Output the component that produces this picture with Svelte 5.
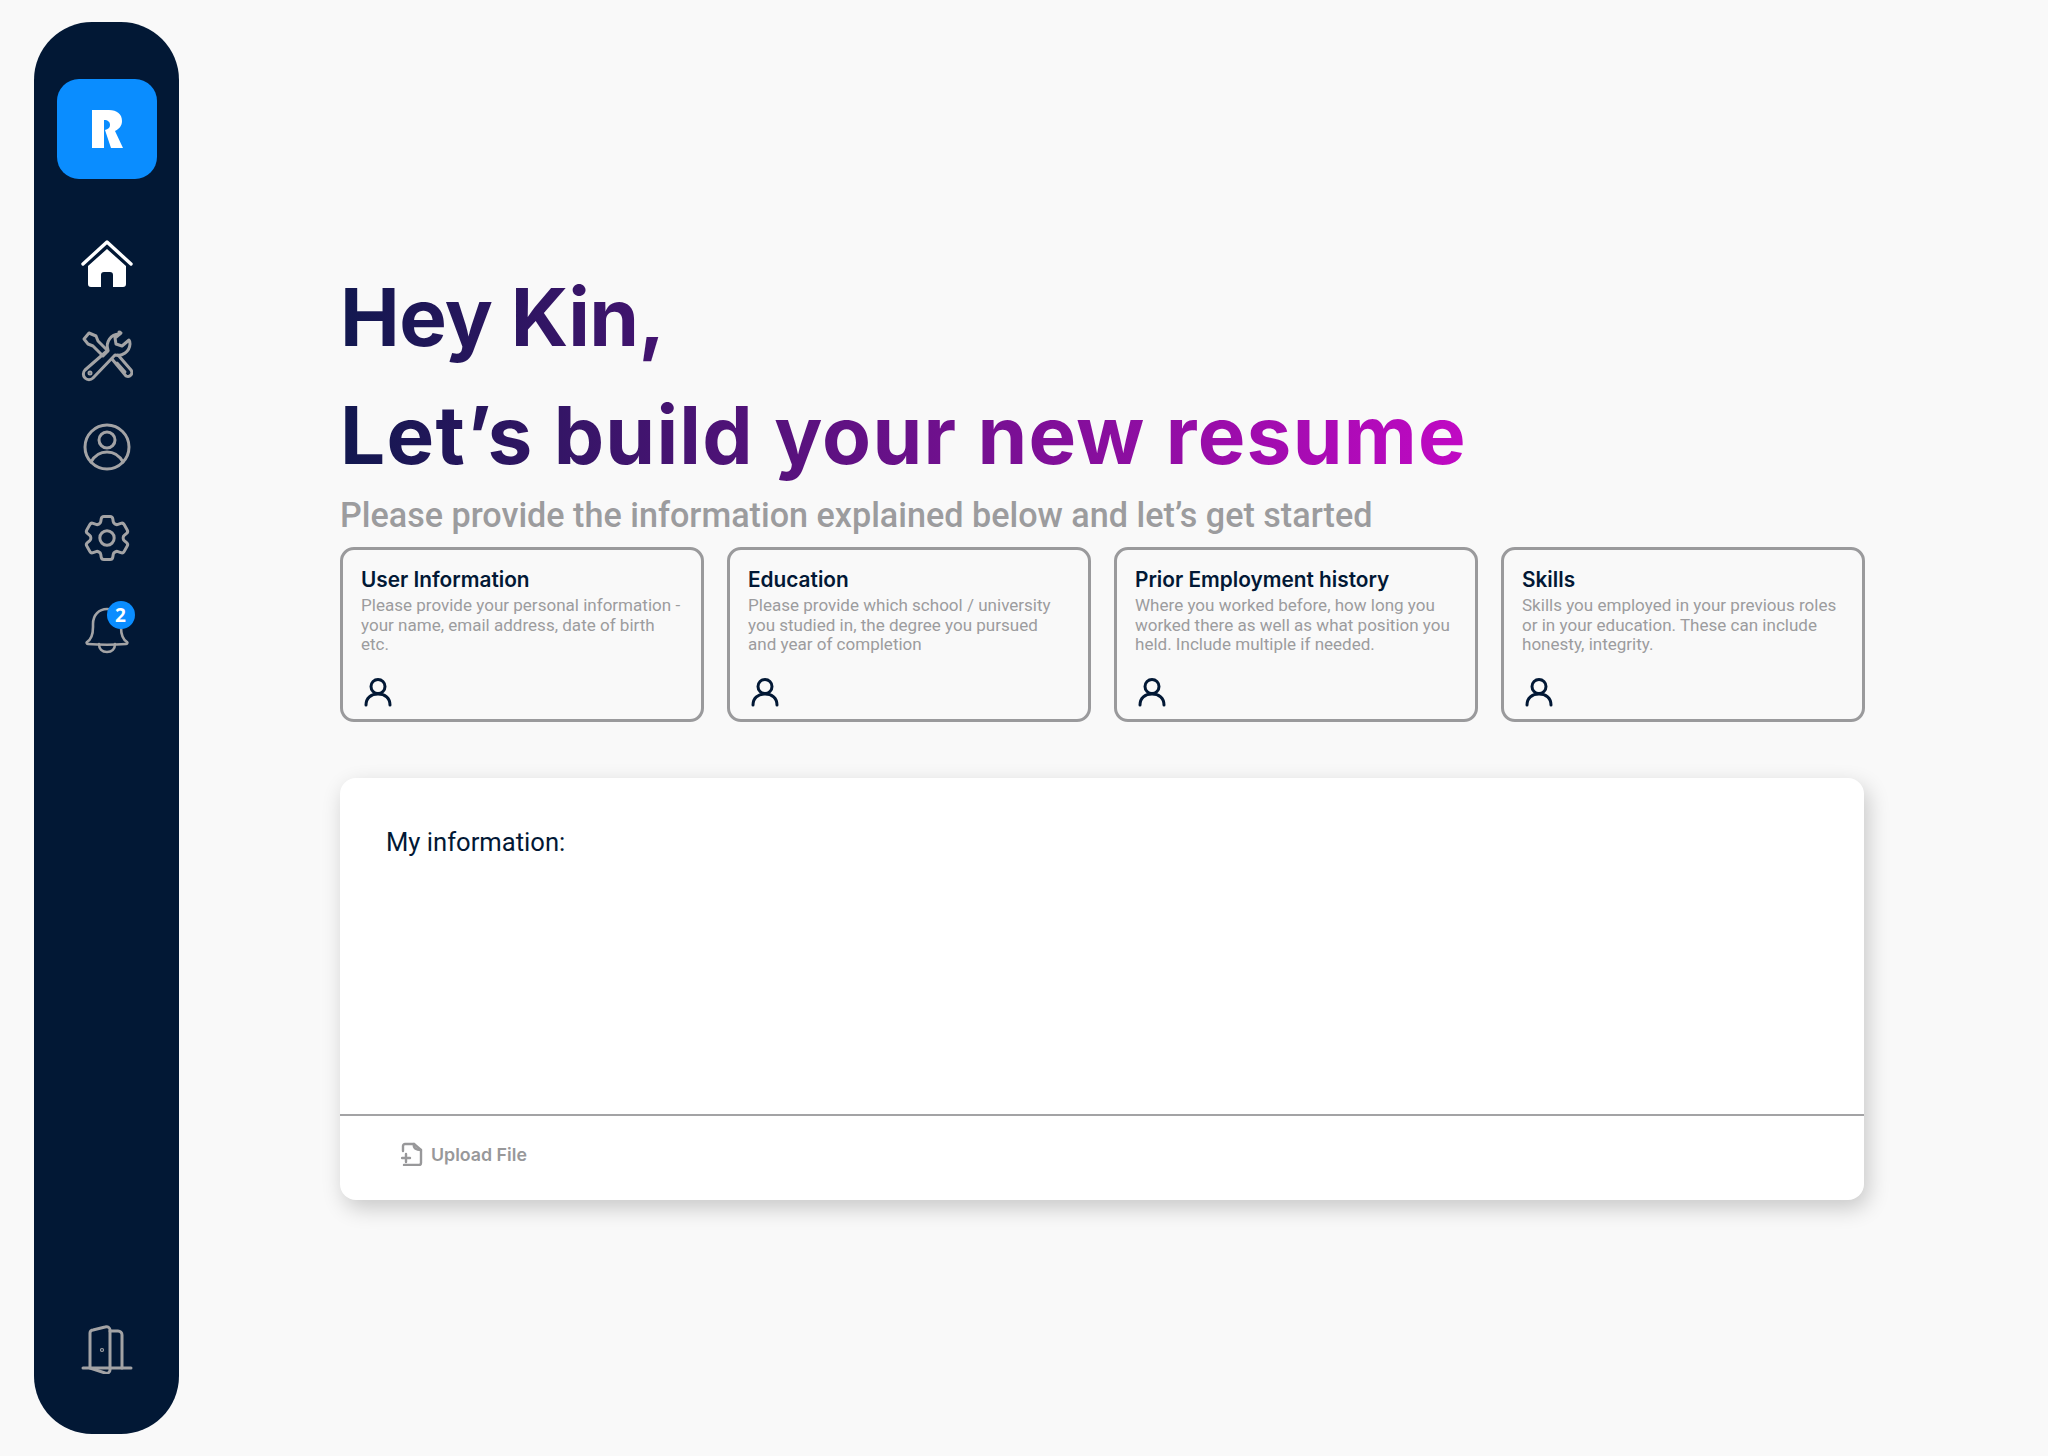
<script>
  const cards = [
    {
      title: "User Information",
      text: "Please provide your personal information - your name, email address, date of birth etc."
    },
    {
      title: "Education",
      text: "Please provide which school / university you studied in, the degree you pursued and year of completion"
    },
    {
      title: "Prior Employment history",
      text: "Where you worked before, how long you worked there as well as what position you held. Include multiple if needed."
    },
    {
      title: "Skills",
      text: "Skills you employed in your previous roles or in your education. These can include honesty, integrity."
    }
  ];
</script>

<div class="page">
  <aside class="sidebar">
    <div class="logo">
      <svg width="31" height="38" viewBox="0 0 31 38">
        <path fill="#fff" d="M0 0h17c8 0 13 4 13 11 0 5-3 8-7 10l8 17H19L13 20c3-1 5-2 5-5 0-3-2-5-6-5v28H0z" />
      </svg>
    </div>

    <nav class="nav">
      <!-- Home -->
      <svg class="icon" viewBox="0 0 52 52" width="52" height="52">
        <path d="M2 25 26 3l24 22" fill="none" stroke="#fff" stroke-width="3.4" stroke-linecap="round" stroke-linejoin="round" />
        <path fill="#fff" d="M26 10 45 27v18a3 3 0 0 1-3 3H32V36a3 3 0 0 0-3-3h-6a3 3 0 0 0-3 3v12H10a3 3 0 0 1-3-3V27z" />
      </svg>
      <!-- Tools -->
      <svg class="icon line" viewBox="0 0 52 52" width="52" height="52">
        <path d="M3 9l5-6 7 3 2 5 10 10-5 5-10-10-5-2z" />
        <path d="M38 4a12 12 0 0 0-11 16L4 40a5 5 0 0 0 8 8l22-23a12 12 0 0 0 15-11c0-2 0-3-1-4l-7 6-6-2-1-6 6-5c-1-1-1-1-2-1z" />
        <path d="M31 29l14 17a4 4 0 0 0 5-6L37 25" />
        <path d="M36 33l8 9" />
        <circle cx="9" cy="43" r="1" />
      </svg>
      <!-- Profile -->
      <svg class="icon line" viewBox="0 0 52 52" width="52" height="52">
        <circle cx="26" cy="26" r="22" />
        <circle cx="26" cy="19" r="8" />
        <path d="M10 41c4-7 10-10 16-10s12 3 16 10" />
      </svg>
      <!-- Settings -->
      <svg class="icon line gear" viewBox="1.15 1.15 21.7 21.7" width="52" height="52">
        <path d="M9.594 3.94c.09-.542.56-.94 1.11-.94h2.593c.55 0 1.02.398 1.11.94l.213 1.281c.063.374.313.686.645.87.074.04.147.083.22.127.325.196.72.257 1.075.124l1.217-.456a1.125 1.125 0 0 1 1.37.49l1.296 2.247a1.125 1.125 0 0 1-.26 1.431l-1.003.827c-.293.241-.438.613-.43.992a7.723 7.723 0 0 1 0 .255c-.008.378.137.75.43.991l1.004.827c.424.35.534.955.26 1.43l-1.298 2.247a1.125 1.125 0 0 1-1.369.491l-1.217-.456c-.355-.133-.75-.072-1.076.124a6.47 6.47 0 0 1-.22.128c-.331.183-.581.495-.644.869l-.213 1.281c-.09.543-.56.94-1.11.94h-2.594c-.55 0-1.019-.398-1.11-.94l-.213-1.281c-.062-.374-.312-.686-.644-.87a6.52 6.52 0 0 1-.22-.127c-.325-.196-.72-.257-1.076-.124l-1.217.456a1.125 1.125 0 0 1-1.369-.49l-1.297-2.247a1.125 1.125 0 0 1 .26-1.431l1.004-.827c.292-.24.437-.613.43-.991a6.932 6.932 0 0 1 0-.255c.007-.38-.138-.751-.43-.992l-1.004-.827a1.125 1.125 0 0 1-.26-1.43l1.297-2.247a1.125 1.125 0 0 1 1.37-.491l1.216.456c.356.133.751.072 1.076-.124.072-.044.146-.086.22-.128.332-.183.582-.495.644-.869l.214-1.28z" />
        <circle cx="12" cy="12" r="3" />
      </svg>
      <!-- Notifications -->
      <div class="bell">
        <svg class="icon line thin" viewBox="0 0 52 52" width="52" height="52">
          <path d="M6 39c5-3 6-8 6-15v-3c0-9 6-15 14-15s14 6 14 15v3c0 7 1 12 6 15 1 1 0 2-1 2-14 1-24 1-38 0-1 0-2-1-1-2z" />
          <path d="M18 41c0 5 3 8 8 8s8-3 8-8" />
        </svg>
        <span class="badge">2</span>
      </div>
    </nav>

    <!-- Log out -->
    <svg class="icon line door" viewBox="0 0 52 52" width="52" height="52">
      <path d="M2 46h48" />
      <path d="M9 46V11a3 3 0 0 1 3-3l12-3c3-1 5 1 5 3v40c0 2-2 4-5 3l-15-5" />
      <path d="M29 9h8a4 4 0 0 1 4 4v33" />
      <circle cx="21" cy="28" r="0.6" />
    </svg>
  </aside>

  <main class="main">
    <h1 class="title">
      <span class="line1">Hey Kin,</span>
      <span class="line2">Let’s build your new resume</span>
    </h1>
    <p class="subtitle">Please provide the information explained below and let’s get started</p>

    <div class="cards">
      {#each cards as card}
        <div class="card">
          <h3>{card.title}</h3>
          <p>{card.text}</p>
          <svg class="user" viewBox="0 0 28 30" width="28" height="30">
            <circle cx="14" cy="9.5" r="7" />
            <path d="M2 28c0-7 5-11 12-11s12 4 12 11" />
          </svg>
        </div>
      {/each}
    </div>

    <section class="info">
      <div class="info-body">My information:</div>
      <div class="info-footer">
        <svg class="upload" viewBox="0 0 22 24" width="22" height="24">
          <path d="M2 9V4a2 2 0 0 1 2-2h9l7 6v13a2 2 0 0 1-2 2H3" />
          <path d="M13 2c-1 4 2 6 7 6" />
          <path d="M1 16h8M5 12v8" />
        </svg>
        <span>Upload File</span>
      </div>
    </section>
  </main>
</div>

<style>
  :global(body) {
    margin: 0;
    background: #f9f9f9;
  }

  .page {
    display: flex;
    height: 1456px;
    box-sizing: border-box;
    padding: 22px 0 22px 34px;
    font-family: Roboto, "Liberation Sans", sans-serif;
  }

  .sidebar {
    width: 145px;
    flex: none;
    background: #021835;
    border-radius: 58px;
    display: flex;
    flex-direction: column;
    align-items: center;
    padding-top: 57px;
    padding-bottom: 60px;
    box-sizing: border-box;
  }

  .logo {
    width: 100px;
    height: 100px;
    background: #0a8dff;
    border-radius: 22px;
    display: flex;
    align-items: center;
    justify-content: center;
    margin-left: 1px;
  }

  .nav {
    display: flex;
    flex-direction: column;
    align-items: center;
    gap: 39px;
    margin-top: 60px;
    flex: 1;
  }

  .icon {
    display: block;
  }

  .line {
    fill: none;
    stroke: #a3a3a5;
    stroke-width: 3;
    stroke-linecap: round;
    stroke-linejoin: round;
  }

  .gear {
    stroke-width: 1.25;
  }

  .thin {
    stroke-width: 2.6;
  }

  .bell {
    position: relative;
    height: 52px;
  }

  .badge {
    position: absolute;
    top: -2px;
    right: -2px;
    width: 28px;
    height: 28px;
    border-radius: 50%;
    background: #0a8dff;
    color: #fff;
    font: 700 19px/28px "Open Sans", sans-serif;
    text-align: center;
  }

  .main {
    margin-left: 161px;
    width: 1524px;
    padding-top: 236px;
  }

  .title {
    margin: 0;
    font-family: Inter, sans-serif;
    font-weight: 700;
    font-size: 80px;
    line-height: 118px;
    background: linear-gradient(90deg, #12184f 0%, #c109c4 74%);
    background-size: 1524px 100%;
    background-repeat: no-repeat;
    -webkit-background-clip: text;
    background-clip: text;
    color: transparent;
    width: 1524px;
  }

  .line1 {
    display: block;
    letter-spacing: -0.6px;
  }

  .line2 {
    display: block;
    letter-spacing: 1.25px;
  }

  .subtitle {
    margin: -1px 0 0;
    color: #9c9c9e;
    font-size: 34.15px;
    font-weight: 500;
    line-height: 44px;
  }

  .cards {
    display: grid;
    grid-template-columns: repeat(4, 364px);
    gap: 23px;
    margin-top: 10px;
  }

  .card {
    height: 175px;
    box-sizing: border-box;
    border: 3px solid #9a9a9c;
    border-radius: 14px;
    padding: 17px 19px 0 18px;
    position: relative;
  }

  .card h3 {
    margin: 0;
    font-family: Inter, sans-serif;
    font-size: 20.8px;
    line-height: 25px;
    font-weight: 600;
    color: #021835;
  }

  .card p {
    margin: 4px 0 0;
    font-size: 17.05px;
    line-height: 19.7px;
    color: #9c9c9e;
  }

  .user {
    position: absolute;
    left: 21px;
    bottom: 12px;
    fill: none;
    stroke: #021835;
    stroke-width: 3;
    stroke-linecap: round;
  }

  .info {
    margin-top: 56px;
    height: 422px;
    background: #fff;
    border-radius: 16px;
    box-shadow: 4px 8px 22px rgba(0, 0, 0, 0.2);
    display: flex;
    flex-direction: column;
  }

  .info-body {
    height: 338px;
    box-sizing: border-box;
    padding: 48px 46px 0;
    font-size: 25.6px;
    line-height: 32px;
    color: #021835;
    border-bottom: 2px solid #a3a3a5;
  }

  .info-footer {
    display: flex;
    align-items: center;
    gap: 8px;
    padding: 26px 61px 0;
    font-family: Inter, sans-serif;
    font-weight: 600;
    font-size: 17.8px;
    color: #98989a;
  }

  .upload {
    fill: none;
    stroke: #98989a;
    stroke-width: 2.4;
    stroke-linecap: round;
    stroke-linejoin: round;
  }
</style>
